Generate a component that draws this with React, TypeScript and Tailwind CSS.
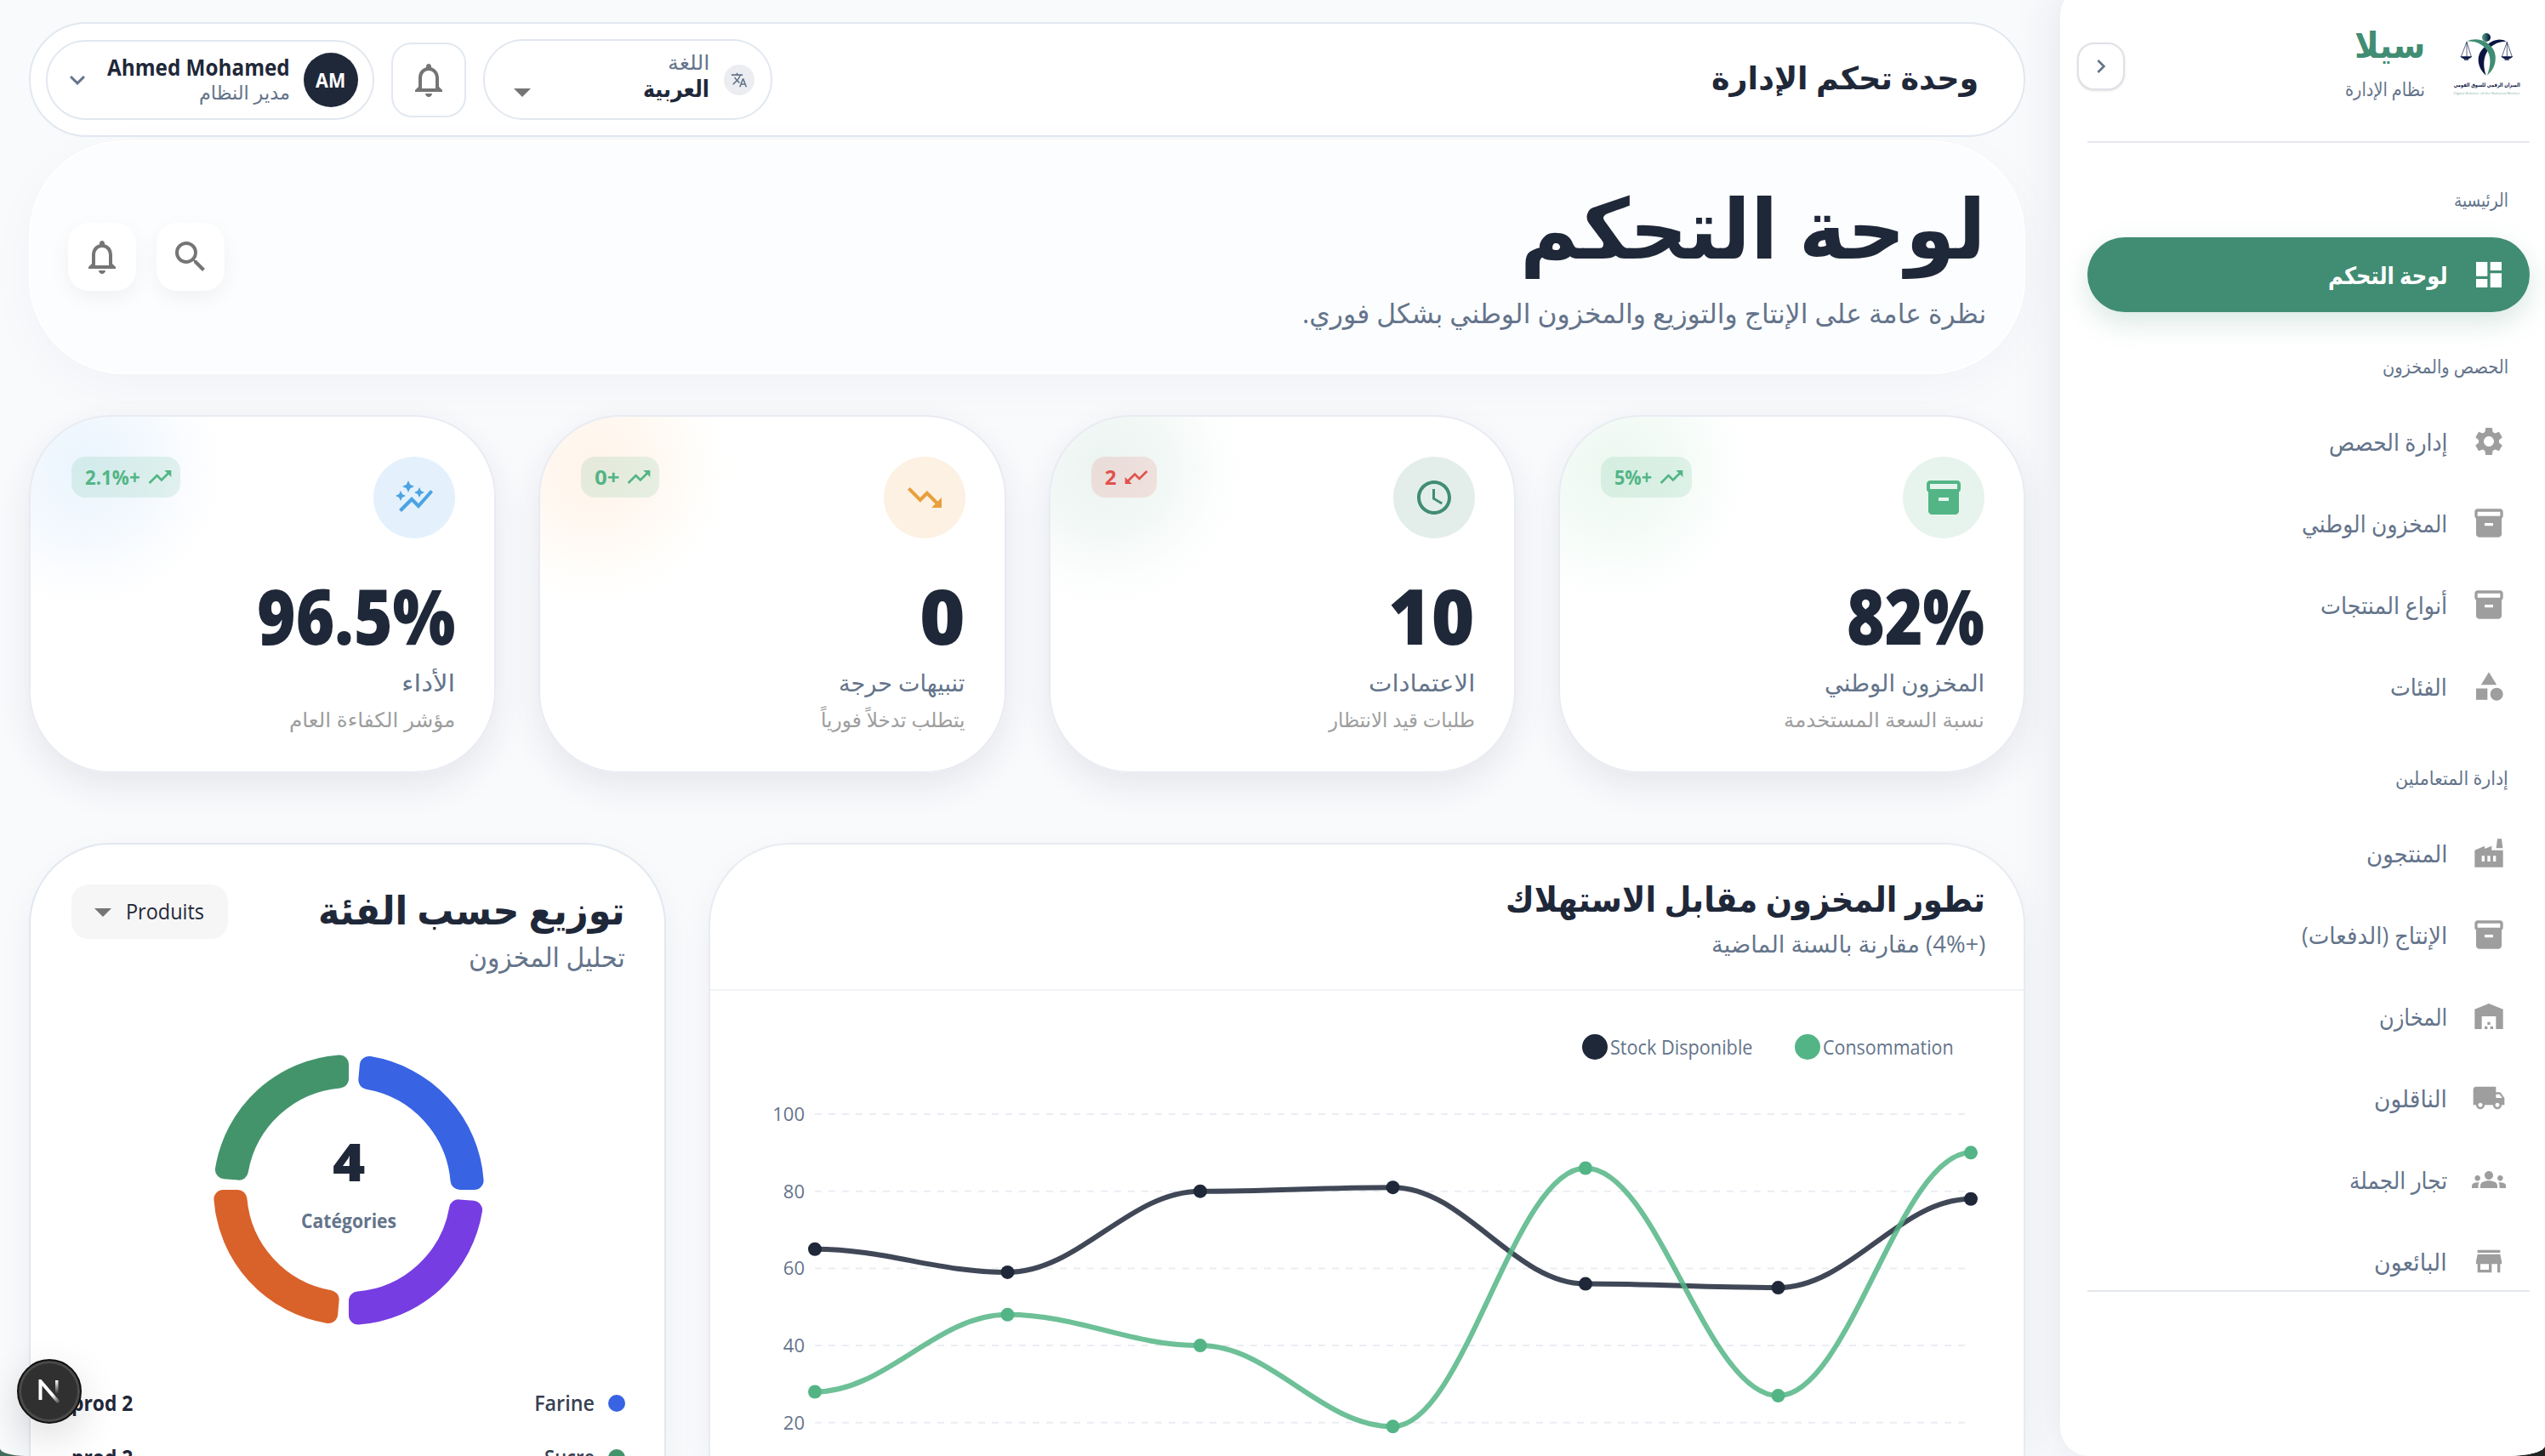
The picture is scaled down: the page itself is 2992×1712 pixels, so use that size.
import { useLayoutEffect, useRef, useState } from "react";
import type { ReactNode } from "react";
import type { IconType } from "react-icons";
import {
  MdArrowDropDown,
  MdAutoGraph,
  MdCategory,
  MdChevronRight,
  MdDashboard,
  MdFactory,
  MdGroups,
  MdInventory2,
  MdKeyboardArrowDown,
  MdLocalShipping,
  MdNotificationsNone,
  MdSchedule,
  MdSearch,
  MdSettings,
  MdStore,
  MdTranslate,
  MdTrendingDown,
  MdTrendingUp,
  MdWarehouse,
} from "react-icons/md";
import clsx from "clsx";

interface FitTextProps {
  width: number;
  className?: string;
  dir?: "rtl" | "ltr";
  children: ReactNode;
}

// Single line of text condensed (or widened) to a fixed width
function FitText({ width, className, dir = "rtl", children }: FitTextProps) {
  const ref = useRef<HTMLSpanElement>(null);
  const [scale, setScale] = useState(1);

  useLayoutEffect(() => {
    if (ref.current) setScale(width / ref.current.offsetWidth);
  }, [width, children]);

  return (
    <div className={clsx("flex whitespace-nowrap", className)} style={{ width }}>
      <span ref={ref} dir={dir} className="block shrink-0 origin-right" style={{ transform: `scaleX(${scale})` }}>
        {children}
      </span>
    </div>
  );
}

interface NavItem {
  label: string;
  width: number;
  icon: IconType;
  active?: boolean;
}

interface NavSection {
  title: string;
  width: number;
  items: NavItem[];
}

const NAV: NavSection[] = [
  {
    title: "الرئيسية",
    width: 64,
    items: [{ label: "لوحة التحكم", width: 140, icon: MdDashboard, active: true }],
  },
  {
    title: "الحصص والمخزون",
    width: 148,
    items: [
      { label: "إدارة الحصص", width: 139, icon: MdSettings },
      { label: "المخزون الوطني", width: 171, icon: MdInventory2 },
      { label: "أنواع المنتجات", width: 149, icon: MdInventory2 },
      { label: "الفئات", width: 67, icon: MdCategory },
    ],
  },
  {
    title: "إدارة المتعاملين",
    width: 133,
    items: [
      { label: "المنتجون", width: 96, icon: MdFactory },
      { label: "الإنتاج (الدفعات)", width: 171, icon: MdInventory2 },
      { label: "المخازن", width: 80, icon: MdWarehouse },
      { label: "الناقلون", width: 86, icon: MdLocalShipping },
      { label: "تجار الجملة", width: 115, icon: MdGroups },
      { label: "البائعون", width: 86, icon: MdStore },
    ],
  },
];

function Logo() {
  return (
    <svg viewBox="0 0 330 300" className="h-[100px] w-[110px]">
      <defs>
        <linearGradient id="head">
          <stop offset="0.2" stopColor="#418d73" />
          <stop offset="0.9" stopColor="#0b1644" />
        </linearGradient>
      </defs>
      <circle cx="159" cy="54" r="15" fill="url(#head)" />
      {/* navy figure behind, green figure in front */}
      <path d="M230 68C210 56 184 60 162 80C138 98 130 116 131 136C132 158 144 176 158 188C150 164 146 134 160 108C172 84 196 68 230 68Z" fill="#0b1644" />
      <path d="M90 68C120 54 154 62 174 84C190 100 194 120 190 142C186 162 176 176 162 188C172 160 178 128 164 104C150 80 124 66 90 68Z" fill="#418d73" />
      <g stroke="#0b1644" strokeWidth="2" fill="none">
        <path d="M90 70L70 122M90 70V122M90 70L106 122" />
        <path d="M232 70L214 122M232 70V122M232 70L250 122" />
      </g>
      <g fill="#0b1644">
        <path d="M67 121H109C104 129 97 130 88 130C79 130 72 129 67 121Z" />
        <path d="M211 121H253C248 129 241 130 232 130C223 130 216 129 211 121Z" />
        <rect x="80" y="130" width="17" height="4" rx="2" />
        <rect x="223" y="130" width="17" height="4" rx="2" />
      </g>
      <text x="161" y="229" textAnchor="middle" direction="rtl" textLength="234" lengthAdjust="spacingAndGlyphs" className="font-['DejaVu_Sans'] text-[19px] font-bold" fill="#0b1644">
        الميزان الرقمي للسوق القومي
      </text>
      <text x="160" y="256" textAnchor="middle" direction="ltr" textLength="233" lengthAdjust="spacingAndGlyphs" className="font-['Open_Sans'] text-[12px]" fill="#7fb3a0">
        Digital Balance of the National Market
      </text>
    </svg>
  );
}

function Sidebar() {
  return (
    <aside className="-mt-4 flex w-[570px] shrink-0 flex-col rounded-l-[34px] bg-white pt-4 pr-[18px] pl-8 shadow-[0_0_60px_rgba(30,41,80,0.11)]">
      <header className="flex h-[168px] shrink-0 items-start border-b-2 border-[#e6e8f0] pt-[26px]">
        <div className="mr-[-6px]">
          <Logo />
        </div>
        <div className="mr-[19px] w-[120px]">
          <FitText width={83} className="h-[52px] text-[42px] leading-[52px] font-bold text-[#418d73]">
            سيلا
          </FitText>
          <FitText width={94} className="mt-[10px] h-8 text-[22px] leading-8 text-[#64748b]">
            نظام الإدارة
          </FitText>
        </div>
        <button className="mt-6 mr-auto ml-[-12px] flex size-14 items-center justify-center rounded-[20px] border-2 border-[#e0e1e7] bg-white text-[#64748b] shadow-sm">
          <MdChevronRight className="size-8" />
        </button>
      </header>

      <nav className="-mr-[18px] -ml-8 h-[1349px] shrink-0 overflow-hidden pt-[3px] pr-[18px] pl-8">
        {NAV.map((section) => (
          <section key={section.title} className="pt-[43px]">
            <FitText width={section.width} className="mr-[25px] mb-[25px] h-10 text-[22px] leading-10 font-medium text-[#64748b]">
              {section.title}
            </FitText>
            <ul className="flex flex-col gap-2">
              {section.items.map((item) => (
                <li
                  key={item.label}
                  className={clsx(
                    "flex h-[88px] items-center gap-[29px] rounded-full pr-7",
                    item.active
                      ? "bg-[#418d73] font-bold text-white shadow-[0_12px_32px_rgba(65,141,115,0.2)]"
                      : "font-medium text-[#64748b]"
                  )}
                >
                  <item.icon className={clsx("size-10", item.active ? "text-white" : "text-[#9e9e9e]")} />
                  <FitText width={item.width} className="text-[28px] leading-10">
                    {item.label}
                  </FitText>
                </li>
              ))}
            </ul>
          </section>
        ))}
      </nav>
      <hr className="border-t-2 border-[#e4e7ec]" />
    </aside>
  );
}

function TopBar() {
  return (
    <header className="flex h-[135px] shrink-0 items-center rounded-full border-2 border-[#e2e8f0] bg-white pr-[53px] pl-[18px]">
      <FitText width={314} className="mt-[-6px] text-[37px] leading-[50px] font-bold text-[#1f2839]">
        وحدة تحكم الإدارة
      </FitText>

      <div className="mr-auto flex h-[95px] w-[340px] items-center rounded-full border-2 border-[#e2e8f0] pr-[19px]">
        <span className="flex size-9 items-center justify-center rounded-full bg-[#ebedf1] text-[#64748b]">
          <MdTranslate className="size-5" />
        </span>
        <div className="mt-[-12px] mr-[17px] w-[160px]">
          <FitText width={49} className="h-[31px] text-[24px] leading-[31px] text-[#64748b]">
            اللغة
          </FitText>
          <FitText width={78} className="h-[31px] text-[27px] leading-[31px] font-bold text-[#1f2839]">
            العربية
          </FitText>
        </div>
        <MdArrowDropDown className="mt-[28px] mr-auto ml-[20px] size-12 text-[#757575]" />
      </div>

      <button className="mr-5 flex size-[88px] items-center justify-center rounded-3xl border-2 border-[#e2e8f0] text-[#757575]">
        <MdNotificationsNone className="size-12" />
      </button>

      <div className="mr-5 flex h-[94px] w-[386px] items-center rounded-full border-2 border-[#e2e8f0] pr-[17px]">
        <span className="flex size-16 items-center justify-center rounded-full bg-[#1f2839] text-white">
          <FitText width={35} dir="ltr" className="text-[24px] font-bold">
            AM
          </FitText>
        </span>
        <div className="mt-[-3px] mr-[16px] w-[215px]">
          <FitText width={215} dir="ltr" className="h-8 text-[27px] leading-[30px] font-bold text-[#1f2839]">
            Ahmed Mohamed
          </FitText>
          <FitText width={107} className="h-6 text-[23px] leading-6 text-[#64748b]">
            مدير النظام
          </FitText>
        </div>
        <MdKeyboardArrowDown className="mr-[17px] size-9 text-[#64748b]" />
      </div>
    </header>
  );
}

function Hero() {
  return (
    <section className="mt-1 flex h-[275px] shrink-0 items-start rounded-[112px] border-2 border-white bg-[#fcfdfe] pt-[39px] pr-[44px] pl-[44px] shadow-[0_16px_60px_rgba(30,41,80,0.03)]">
      <div>
        <FitText width={548} className="h-[120px] text-[98px] leading-[120px] font-bold text-[#1f2839]">
          لوحة التحكم
        </FitText>
        <FitText width={804} className="mt-[22px] h-10 text-[32px] leading-10 text-[#64748b]">
          نظرة عامة على الإنتاج والتوزيع والمخزون الوطني بشكل فوري.
        </FitText>
      </div>
      <div className="mt-[56px] mr-auto flex gap-6 text-[#757575]">
        <button className="flex size-20 items-center justify-center rounded-3xl bg-white shadow-[0_8px_24px_rgba(0,0,0,0.05)]">
          <MdSearch className="size-12" />
        </button>
        <button className="flex size-20 items-center justify-center rounded-3xl bg-white shadow-[0_8px_24px_rgba(0,0,0,0.05)]">
          <MdNotificationsNone className="size-12" />
        </button>
      </div>
    </section>
  );
}

interface Stat {
  value: string;
  valueWidth: number;
  label: string;
  labelWidth: number;
  note: string;
  noteWidth: number;
  change: string;
  changeWidth: number;
  down?: boolean;
  icon: IconType;
  iconClass: string;
  glowClass: string;
}

const STATS: Stat[] = [
  {
    value: "82%",
    valueWidth: 162,
    label: "المخزون الوطني",
    labelWidth: 188,
    note: "نسبة السعة المستخدمة",
    noteWidth: 236,
    change: "+5%",
    changeWidth: 44,
    icon: MdInventory2,
    iconClass: "bg-[#e7f4ed] text-[#53b585]",
    glowClass: "bg-[radial-gradient(circle_at_64px_60px,#edf8f1,#f3fbf6_70px,#fcfefd_130px,#fff_165px)]",
  },
  {
    value: "10",
    valueWidth: 101,
    label: "الاعتمادات",
    labelWidth: 125,
    note: "طلبات قيد الانتظار",
    noteWidth: 172,
    change: "2",
    changeWidth: 14,
    down: true,
    icon: MdSchedule,
    iconClass: "bg-[#e3eeea] text-[#418d73]",
    glowClass: "bg-[radial-gradient(circle_at_64px_60px,#ebf4f1,#f2f8f5_70px,#fcfdfd_130px,#fff_165px)]",
  },
  {
    value: "0",
    valueWidth: 54,
    label: "تنبيهات حرجة",
    labelWidth: 148,
    note: "يتطلب تدخلاً فورياً",
    noteWidth: 169,
    change: "+0",
    changeWidth: 29,
    icon: MdTrendingDown,
    iconClass: "bg-[#fcf1e2] text-[#e89f3c]",
    glowClass: "bg-[radial-gradient(circle_at_64px_60px,#fff4ea,#fff8f1_70px,#fffefc_130px,#fff_165px)]",
  },
  {
    value: "96.5%",
    valueWidth: 234,
    label: "الأداء",
    labelWidth: 63,
    note: "مؤشر الكفاءة العام",
    noteWidth: 195,
    change: "+2.1%",
    changeWidth: 65,
    icon: MdAutoGraph,
    iconClass: "bg-[#e4f1fc] text-[#4ba3e3]",
    glowClass: "bg-[radial-gradient(circle_at_64px_60px,#ebf5fe,#f2f8fe_70px,#fcfdff_130px,#fff_165px)]",
  },
];

function StatCard({ stat }: { stat: Stat }) {
  return (
    <article
      className={clsx(
        "h-[421px] rounded-[96px] border-2 border-[#e9ebf2] py-[47px] pr-[46px] pl-12 shadow-[0_16px_40px_rgba(30,41,80,0.09)]",
        stat.glowClass
      )}
    >
      <div className="flex items-start justify-between">
        <span className={clsx("flex size-24 items-center justify-center rounded-full", stat.iconClass)}>
          <stat.icon className="size-12" />
        </span>
        <span
          className={clsx(
            "flex h-12 items-center gap-[7px] rounded-2xl pr-2 pl-4",
            stat.down ? "bg-[#e0524d]/14 text-[#e0524d]" : "bg-[#53b585]/15 text-[#53b585]"
          )}
        >
          {stat.down ? <MdTrendingDown className="size-8 -scale-x-100" /> : <MdTrendingUp className="size-8" />}
          <FitText width={stat.changeWidth} className="text-[24px] leading-8 font-bold">
            {stat.change}
          </FitText>
        </span>
      </div>
      <FitText width={stat.valueWidth} dir="ltr" className="mt-10 h-[100px] text-[90px] leading-[100px] font-extrabold text-[#1f2839]">
        {stat.value}
      </FitText>
      <FitText width={stat.labelWidth} className="mt-[9px] h-10 text-[28px] leading-10 font-medium text-[#64748b]">
        {stat.label}
      </FitText>
      <FitText width={stat.noteWidth} className="mt-[7px] h-[34px] text-[24px] leading-[34px] text-[#9e9e9e]">
        {stat.note}
      </FitText>
    </article>
  );
}

const STOCK = [65, 59, 80, 81, 56, 55, 78];
const CONSUMPTION = [28, 48, 40, 19, 86, 27, 90];

const chartX = (i: number) => 123 + i * 226.5;
const chartY = (v: number) => 41 + (100 - v) * 4.535;

function curve(values: number[]) {
  return values
    .map((v, i) => {
      if (i === 0) return `M${chartX(0)} ${chartY(v)}`;
      const dx = 226.5 * 0.37;
      return `C${chartX(i - 1) + dx} ${chartY(values[i - 1])} ${chartX(i) - dx} ${chartY(v)} ${chartX(i)} ${chartY(v)}`;
    })
    .join("");
}

function Series({ values, color }: { values: number[]; color: string }) {
  return (
    <g>
      <path d={curve(values)} fill="none" stroke={color} strokeOpacity="0.85" strokeWidth="6" />
      {values.map((v, i) => (
        <circle key={i} cx={chartX(i)} cy={chartY(v)} r="8" fill={color} />
      ))}
    </g>
  );
}

function StockChart() {
  return (
    <article className="w-[1548px] shrink-0 overflow-hidden rounded-t-[96px] border-2 border-b-0 border-[#e9ebf2] bg-white shadow-[0_16px_40px_rgba(30,41,80,0.05)]">
      <header className="h-[172px] border-b-2 border-[#f1f2f5] pt-[37px] pr-[45px]">
        <FitText width={564} className="h-[52px] text-[41px] leading-[52px] font-bold text-[#1f2839]">
          تطور المخزون مقابل الاستهلاك
        </FitText>
        <FitText width={322} className="mt-[10px] h-9 text-[27px] leading-9 text-[#64748b]">
          (+4%) مقارنة بالسنة الماضية
        </FitText>
      </header>
      <div className="flex h-[104px] items-center gap-[49px] pt-[28px] pr-[82px] text-[24px] text-[#64748b]">
        <div className="flex items-center gap-[3px]">
          <FitText width={154} dir="ltr">
            Consommation
          </FitText>
          <span className="size-[30px] rounded-full bg-[#53b585]" />
        </div>
        <div className="flex items-center gap-[3px]">
          <FitText width={168} dir="ltr">
            Stock Disponible
          </FitText>
          <span className="size-[30px] rounded-full bg-[#1f2839]" />
        </div>
      </div>
      <svg viewBox="0 0 1544 460" className="block h-[460px] w-[1544px]">
        {[100, 80, 60, 40, 20].map((v) => (
          <g key={v}>
            <line x1="123" x2="1482" y1={chartY(v)} y2={chartY(v)} stroke="#ebedf4" strokeWidth="2" strokeDasharray="8 8" />
            <text x="111" y={chartY(v) + 8} textAnchor="end" direction="ltr" className="text-[22px]" fill="#64748b">
              {v}
            </text>
          </g>
        ))}
        <Series values={STOCK} color="#1f2839" />
        <Series values={CONSUMPTION} color="#53b585" />
      </svg>
    </article>
  );
}

const CX = 160;
const CY = 160;
const CORNER = 11;

function point(r: number, angle: number) {
  return `${CX + r * Math.cos(angle)} ${CY - r * Math.sin(angle)}`;
}

// Ring sector inset by CORNER; a round-joined stroke of the same size brings it back to full size
function sector(startDeg: number, endDeg: number) {
  const outer = 159 - CORNER;
  const inner = 120 + CORNER;
  const start = (startDeg * Math.PI) / 180;
  const end = (endDeg * Math.PI) / 180;
  const padOuter = Math.asin(CORNER / outer);
  const padInner = Math.asin(CORNER / inner);
  return (
    `M${point(outer, start + padOuter)}A${outer} ${outer} 0 0 0 ${point(outer, end - padOuter)}` +
    `L${point(inner, end - padInner)}A${inner} ${inner} 0 0 1 ${point(inner, start + padInner)}Z`
  );
}

const SLICES = [
  { name: "Farine", color: "#3863e3", amount: "prod 2", from: 0 },
  { name: "Sucre", color: "#44946b", amount: "prod 2", from: 90 },
  { name: "Huile", color: "#d9622b", amount: "prod 2", from: 180 },
  { name: "Lait", color: "#763de2", amount: "prod 2", from: 270 },
];

function CategoryCard() {
  return (
    <article className="flex w-[749px] shrink-0 flex-col rounded-t-[96px] border-2 border-b-0 border-[#e2e8f0] bg-white pt-[47px] pr-[46px] pl-12 shadow-[0_16px_40px_rgba(30,41,80,0.05)]">
      <header className="flex items-start justify-between">
        <div>
          <FitText width={361} className="h-[60px] text-[46px] leading-[58px] font-bold text-[#1f2839]">
            توزيع حسب الفئة
          </FitText>
          <FitText width={184} className="mt-[5px] h-10 text-[32px] leading-10 text-[#64748b]">
            تحليل المخزون
          </FitText>
        </div>
        <button className="flex h-16 w-[184px] items-center rounded-[20px] bg-[#f6f6f6] pr-7">
          <FitText width={92} dir="ltr" className="text-[25px] text-[#1f2839]">
            Produits
          </FitText>
          <MdArrowDropDown className="mr-[3px] size-12 text-[#757575]" />
        </button>
      </header>

      <div className="mt-[94px] mr-[165px] grid size-80 shrink-0 place-items-center">
        <svg viewBox="0 0 320 320" className="col-start-1 row-start-1 size-80">
          {SLICES.map((s) => (
            <path key={s.name} d={sector(s.from, s.from + 85)} fill={s.color} stroke={s.color} strokeWidth={CORNER * 2} strokeLinejoin="round" />
          ))}
        </svg>
        <div className="col-start-1 row-start-1 flex flex-col items-center">
          <FitText width={38} dir="ltr" className="-mt-[14px] h-16 text-[62px] leading-[64px] font-extrabold text-[#1f2839]">
            4
          </FitText>
          <FitText width={112} dir="ltr" className="mt-[22px] h-8 text-[24px] leading-8 font-bold text-[#64748b]">
            Catégories
          </FitText>
        </div>
      </div>

      <ul className="mt-[59px] h-[110px]">
        {SLICES.slice(0, 2).map((s) => (
          <li key={s.name} className="flex h-16 items-center">
            <span className="size-5 rounded-full" style={{ backgroundColor: s.color }} />
            <FitText width={s.name.length * 11.8} dir="ltr" className="mr-4 text-[25px] font-semibold text-[#374151]">
              {s.name}
            </FitText>
            <FitText width={72} dir="ltr" className="mr-auto text-[25px] font-bold text-[#1f2839]">
              {s.amount}
            </FitText>
          </li>
        ))}
      </ul>
    </article>
  );
}

function DevBadge() {
  return (
    <div className="absolute top-[1598px] left-5 flex size-[76px] items-center justify-center rounded-full border-2 border-[#111] bg-[#303030] shadow-[inset_0_0_0_3px_#4a4a4a,0_16px_48px_rgba(0,0,0,0.14)]">
      <svg viewBox="0 0 26 28" className="h-7 w-[26px]" fill="none">
        <defs>
          <linearGradient id="stem" x1="0" y1="0" x2="0" y2="1">
            <stop stopColor="#fff" />
            <stop offset="1" stopColor="#fff" stopOpacity="0" />
          </linearGradient>
          <linearGradient id="diag" x1="0" y1="0" x2="26" y2="28" gradientUnits="userSpaceOnUse">
            <stop offset="0.65" stopColor="#fff" />
            <stop offset="1" stopColor="#fff" stopOpacity="0" />
          </linearGradient>
        </defs>
        <path d="M2.5 24V2L24 27" stroke="url(#diag)" strokeWidth="4" />
        <rect x="20" y="1" width="3.5" height="16" fill="url(#stem)" />
      </svg>
    </div>
  );
}

export default function App() {
  return (
    <div className="h-[1712px] w-[2992px] overflow-hidden bg-linear-to-r from-[#436b5b] to-[#1d2623] font-['Open_Sans','DejaVu_Sans',sans-serif]">
      <div dir="rtl" className="relative flex h-full overflow-hidden rounded-br-[44px_12px] rounded-bl-[30px_9px] bg-[#f9fafc]">
        <Sidebar />
        <main className="flex min-w-0 flex-1 flex-col pt-[26px] pr-[41px] pl-[34px]">
          <TopBar />
          <Hero />
          <section className="mt-12 grid shrink-0 grid-cols-4 gap-[50px]">
            {STATS.map((stat) => (
              <StatCard key={stat.label} stat={stat} />
            ))}
          </section>
          <section className="mt-[82px] flex min-h-0 flex-1 justify-between">
            <StockChart />
            <CategoryCard />
          </section>
        </main>
        <DevBadge />
      </div>
    </div>
  );
}
